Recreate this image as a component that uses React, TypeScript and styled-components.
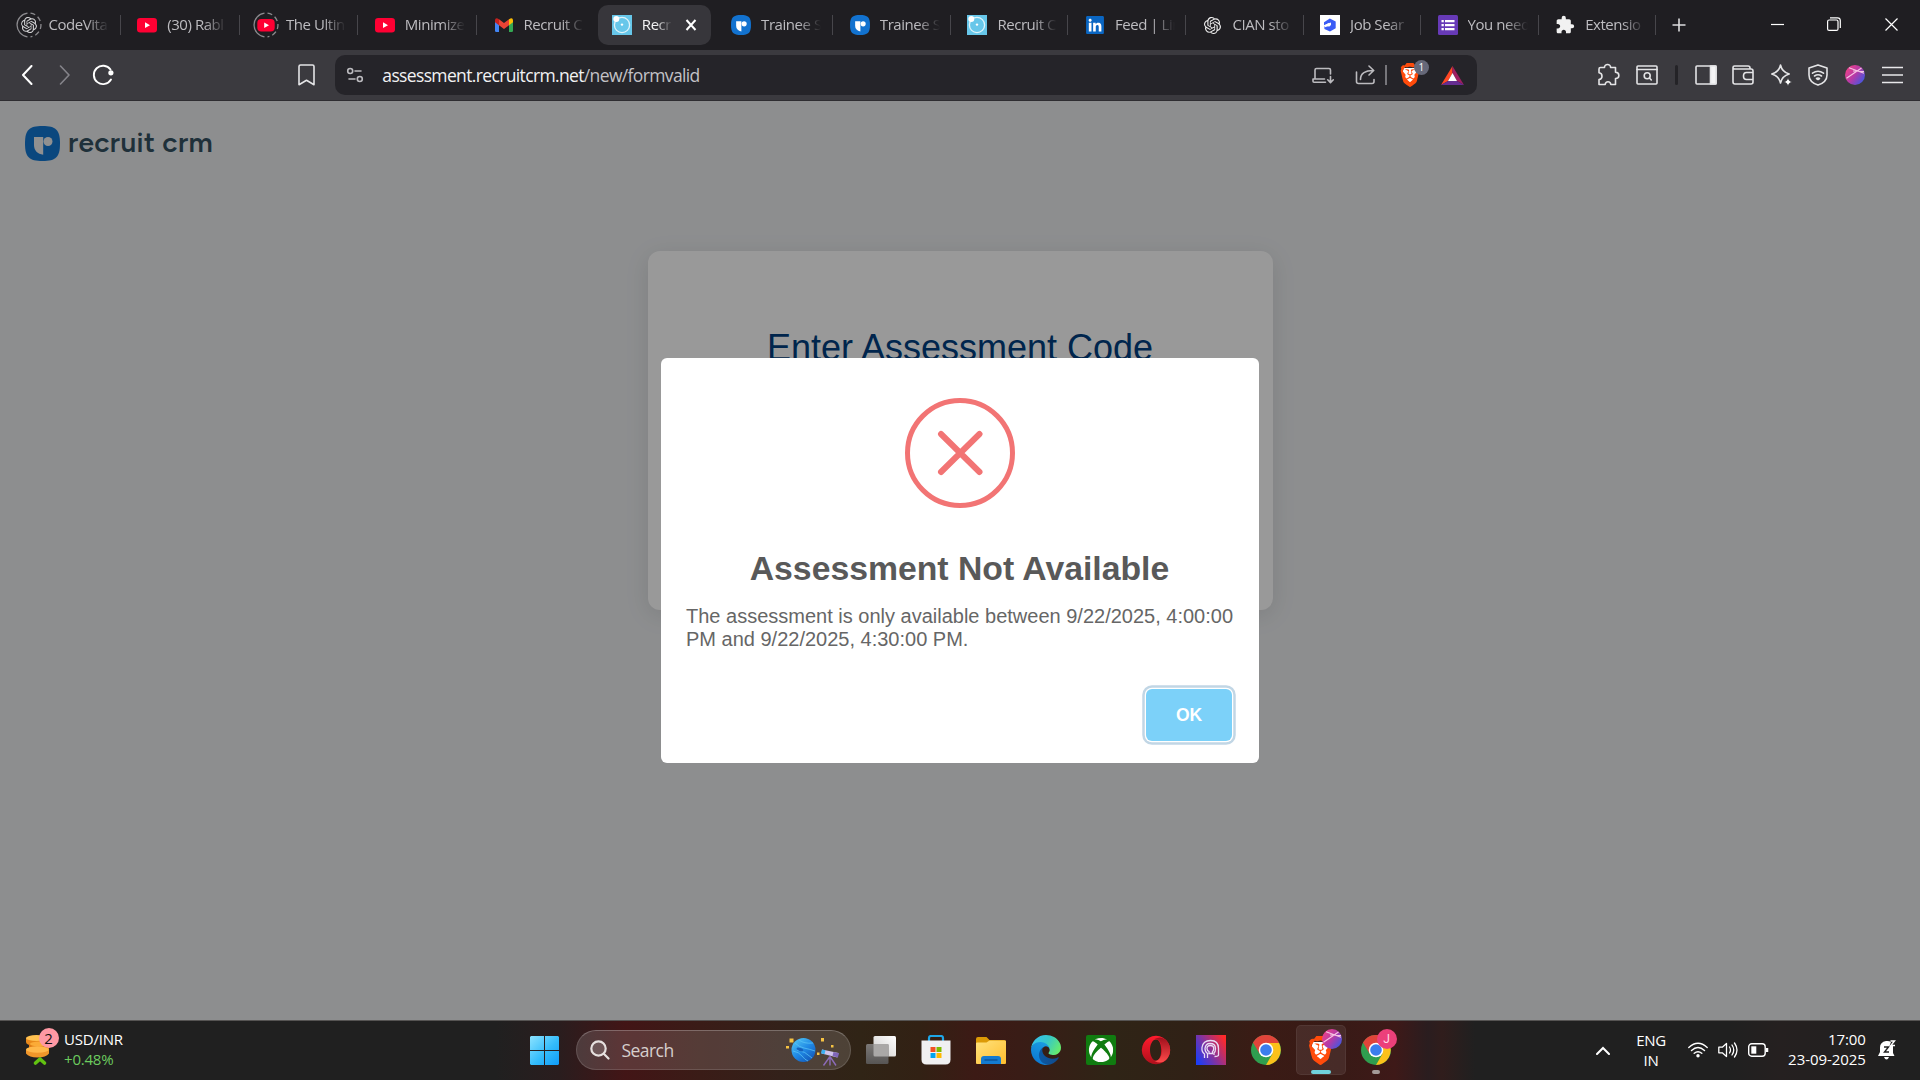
import React from "react";
import styled, { createGlobalStyle, css } from "styled-components";
import { SiBrave, SiOpenai } from "react-icons/si";
import { FaXbox, FaLinkedin } from "react-icons/fa";
import { MdExtension } from "react-icons/md";

const uiFont = `"Segoe UI", "Open Sans", "Noto Sans", sans-serif`;
const pageFont = `Arial, "Liberation Sans", sans-serif`;

const GlobalStyle = createGlobalStyle`
  * { box-sizing: border-box; }
  body { margin: 0; background: #202020; overflow: hidden; }
  svg { display: block; flex: none; }
`;

const Screen = styled.div`
  display: flex;
  flex-direction: column;
  width: 1920px;
  height: 1080px;
  overflow: hidden;
  font-family: ${uiFont};
`;

/* ---------- tab strip ---------- */
const TabStrip = styled.header`
  display: flex;
  align-items: center;
  height: 50px;
  padding-left: 2px;
  background: #1f1e22;
  flex: none;
`;

const TabItem = styled.div<{ $active?: boolean; $width: number; $divider?: boolean }>`
  display: flex;
  align-items: center;
  width: ${(p) => p.$width}px;
  height: 40px;
  padding-left: 16.5px;
  flex: none;
  ${(p) =>
    p.$divider &&
    css`
      background: linear-gradient(#47464b, #47464b) right center / 1px 20px no-repeat;
    `}
  ${(p) =>
    p.$active &&
    css`
      width: ${p.$width - 5.5}px;
      margin: 0 3.5px 0 2px;
      padding-left: 14px;
      border-radius: 10px;
      background: #37363b;
    `}
`;

const Favicon = styled.span`
  display: flex;
  align-items: center;
  justify-content: center;
  width: 20px;
  height: 20px;
  margin-right: 10px;
  flex: none;
  color: #e9e9ea;
  svg { overflow: visible; }
`;

const TabTitle = styled.span<{ $active?: boolean }>`
  width: ${(p) => (p.$active ? 30 : 60)}px;
  padding-bottom: 2px;
  white-space: nowrap;
  font-size: 15px;
  line-height: 20px;
  letter-spacing: -0.45px;
  color: ${(p) => (p.$active ? "#f4f4f5" : "#bdbcc0")};
  mask-image: linear-gradient(90deg, #000 ${(p) => (p.$active ? 45 : 62)}%, transparent 100%);
`;

const TabClose = styled.span`
  margin-left: 7px;
`;

const NewTab = styled.span`
  display: flex;
  justify-content: center;
  width: 46px;
`;

const WindowControls = styled.div`
  display: flex;
  margin-left: auto;
  padding-bottom: 2px;
`;

const WindowControl = styled.span`
  display: flex;
  align-items: center;
  justify-content: center;
  width: 57px;
  height: 40px;
`;

/* ---------- toolbar ---------- */
const Toolbar = styled.nav`
  display: flex;
  align-items: center;
  height: 51px;
  background: #3b3a3f;
  border-bottom: 1px solid #2e2d31;
  color: #e4e4e6;
  flex: none;
`;

const NavButtons = styled.div`
  display: flex;
  width: 288px;
  padding-left: 8px;
`;

const Slot = styled.span<{ $w?: number }>`
  display: flex;
  align-items: center;
  justify-content: center;
  width: ${(p) => p.$w ?? 37.3}px;
  height: 40px;
  flex: none;
`;

const AddressBar = styled.div`
  display: flex;
  align-items: center;
  width: 1142px;
  height: 40px;
  margin-left: 10px;
  padding: 0 5.5px 0 11px;
  border-radius: 10px;
  background: #252429;
  color: #bcbbbf;
`;

const Url = styled.span`
  flex: 1;
  padding-left: 18px;
  padding-bottom: 1px;
  font-size: 17.5px;
  line-height: 24px;
  letter-spacing: -0.64px;
  white-space: nowrap;
  color: #c3c2c6;
  b { font-weight: 400; color: #f2f2f3; }
`;

const ThinRule = styled.span`
  width: 1.5px;
  height: 20px;
  background: #77767b;
`;

const ShieldWrap = styled.span`
  position: relative;
  display: flex;
  justify-content: center;
  width: 47px;
`;

const Count = styled.span`
  position: absolute;
  left: 27px;
  top: -3px;
  width: 15px;
  height: 15px;
  border-radius: 50%;
  background: #666879;
  color: #fff;
  font-size: 10px;
  line-height: 15px;
  text-align: center;
`;

const Tools = styled.div`
  display: flex;
  align-items: center;
  margin-left: auto;
  padding-right: 8.7px;
`;

const DarkRule = styled.span`
  width: 3px;
  height: 20px;
  border-radius: 2px;
  background: #242327;
`;

/* ---------- page ---------- */
const Page = styled.main`
  position: relative;
  height: 919px;
  flex: none;
  background: #ebedef;
  font-family: ${pageFont};
`;

const Brand = styled.div`
  display: flex;
  align-items: center;
  height: 85px;
  padding-left: 25px;
  gap: 8px;
`;

const BrandName = styled.span`
  padding-bottom: 4px;
  font-family: Figtree, Inter, sans-serif;
  font-size: 28px;
  font-weight: 600;
  line-height: 34px;
  letter-spacing: 0.35px;
  color: #345061;
`;

const CodeCard = styled.section`
  width: 625px;
  height: 359px;
  margin: 65px auto 0;
  padding-top: 74px;
  border-radius: 12px;
  background: #fff;
  box-shadow: 0 5px 25px rgba(0, 0, 0, 0.1);
  text-align: center;
`;

const CardTitle = styled.h1`
  margin: 0;
  font-size: 36px;
  font-weight: 400;
  line-height: 46px;
  color: #003f80;
`;

const Overlay = styled.div`
  position: absolute;
  inset: 0;
  display: flex;
  justify-content: center;
  align-items: flex-start;
  padding-top: 257px;
  background: rgba(0, 0, 0, 0.4);
`;

const Dialog = styled.div`
  display: flex;
  flex-direction: column;
  width: 598px;
  height: 405px;
  border-radius: 6px;
  background: #fff;
`;

const ErrorMark = styled.div`
  display: flex;
  align-items: center;
  justify-content: center;
  width: 110px;
  height: 110px;
  margin: 40px auto 0;
  padding-bottom: 1px;
  border: 5px solid #f27474;
  border-radius: 50%;
`;

const DialogTitle = styled.h2`
  margin: 41px 1px 0 0;
  font-size: 33.75px;
  font-weight: 700;
  line-height: 38px;
  text-align: center;
  color: #595959;
`;

const DialogText = styled.p`
  margin: 18px 0 0;
  padding: 0 20px 0 25px;
  font-size: 20px;
  line-height: 23px;
  color: #666;
`;

const DialogFooter = styled.div`
  display: flex;
  justify-content: flex-end;
  margin-top: auto;
  padding: 0 27px 22px 0;
`;

const OkButton = styled.button`
  width: 86px;
  height: 52px;
  border: 0;
  border-radius: 6px;
  background: #7cd1f9;
  box-shadow: 0 0 0 1.25px #fff, 0 0 0 3.75px rgba(43, 114, 165, 0.29);
  color: #fff;
  font: 700 17.5px/20px ${pageFont};
`;

/* ---------- taskbar ---------- */
const Taskbar = styled.footer`
  display: flex;
  align-items: center;
  height: 60px;
  padding-bottom: 1px;
  border-top: 1px solid #565453;
  color: #fff;
  background: linear-gradient(
    90deg,
    #202020 0,
    #202020 495px,
    #2a1d1e 560px,
    #421516 625px,
    #3a1c17 700px,
    #33211a 780px,
    #302416 860px,
    #322114 920px,
    #3c1a15 975px,
    #391c16 1020px,
    #2f2416 1110px,
    #302116 1190px,
    #3a1b15 1260px,
    #381a16 1340px,
    #3e1918 1395px,
    #2a1d1f 1428px,
    #301d1c 1442px,
    #202020 1475px,
    #202020 1730px,
    #252020 1780px,
    #202020 1900px
  );
`;

const Widget = styled.div`
  display: flex;
  align-items: center;
  width: 519.5px;
  padding-left: 24px;
  gap: 10px;
`;

const CoinArt = styled.div`
  position: relative;
  width: 30px;
  height: 40px;
`;

const RoundBadge = styled.span<{ $bg: string; $fg: string; $x: number; $y: number; $size?: number }>`
  position: absolute;
  left: ${(p) => p.$x}px;
  top: ${(p) => p.$y}px;
  width: 20px;
  height: 20px;
  border-radius: 50%;
  background: ${(p) => p.$bg};
  color: ${(p) => p.$fg};
  font-family: ${(p) => (p.$size ? "Roboto, sans-serif" : "inherit")};
  font-size: ${(p) => p.$size ?? 15}px;
  line-height: 20px;
  text-align: center;
`;

const Stack = styled.div<{ $align?: string; $ls?: number; $lift?: number }>`
  display: flex;
  flex-direction: column;
  padding-bottom: ${(p) => p.$lift ?? 3}px;
  text-align: ${(p) => p.$align ?? "left"};
  font-size: 15px;
  line-height: 20px;
  letter-spacing: ${(p) => p.$ls ?? -0.3}px;
  white-space: nowrap;
`;

const Gain = styled.span`
  color: #6ccb5f;
`;

const TaskButton = styled.span<{ $active?: boolean }>`
  position: relative;
  display: flex;
  align-items: center;
  justify-content: center;
  width: 50px;
  height: 50px;
  margin-right: 5px;
  flex: none;
  border-radius: 5px;
  ${(p) =>
    p.$active &&
    css`
      background: rgba(255, 255, 255, 0.08);
      box-shadow: inset 0 0 0 1px rgba(255, 255, 255, 0.06);
    `}
`;

const RunMark = styled.i<{ $w: number; $color: string }>`
  position: absolute;
  left: ${(p) => (50 - p.$w) / 2}px;
  bottom: 1px;
  width: ${(p) => p.$w}px;
  height: 4px;
  border-radius: 2px;
  background: ${(p) => p.$color};
`;

const SearchBox = styled.div`
  display: flex;
  align-items: center;
  width: 275px;
  height: 40px;
  margin: 0 5px 0 1px;
  padding: 0 9px 0 13px;
  border: 1px solid rgba(255, 255, 255, 0.13);
  border-top-color: rgba(255, 255, 255, 0.24);
  border-radius: 20px;
  background: rgba(255, 255, 255, 0.14);
  flex: none;
`;

const SearchLabel = styled.span`
  flex: 1;
  padding: 0 0 1px 12px;
  font-size: 17.5px;
  line-height: 24px;
  letter-spacing: -0.55px;
  color: #d6cfcd;
`;

const Tray = styled.div`
  display: flex;
  align-items: center;
  margin-left: auto;
  padding-right: 23px;
`;

const TraySlot = styled.span<{ $w: number }>`
  display: flex;
  justify-content: center;
  width: ${(p) => p.$w}px;
`;

const line = {
  fill: "none",
  stroke: "currentColor",
  strokeWidth: 1.6,
  strokeLinecap: "round" as const,
  strokeLinejoin: "round" as const,
};

/* ---------- favicons ---------- */
const YouTubeIcon = ({ w = 20 }: { w?: number }) => (
  <svg width={w} height={w * 0.72} viewBox="0 0 20 14.4">
    <rect width="20" height="14.4" rx="3.2" fill="#ff0033" />
    <path d="M8 4.3l5 2.9-5 2.9z" fill="#fff" />
  </svg>
);

const LoadingRing = ({ children }: { children: React.ReactNode }) => (
  <svg width="26" height="26" viewBox="0 0 26 26">
    <path d="M11.500 1.100A12 12 0 0 0 11.500 24.900" fill="none" stroke="#8b8a8e" strokeWidth="1.3" />
    <path
      d="M14.500 1.100A12 12 0 0 1 14.500 24.900"
      fill="none"
      stroke="#8b8a8e"
      strokeWidth="1.3"
      strokeDasharray="5 3.1"
    />
    {children}
  </svg>
);

const GmailIcon = () => (
  <svg width="18" height="14" viewBox="0 0 18 14">
    <path d="M0 2.500V12.700Q0 14 1.300 14H4V5z" fill="#4285f4" />
    <path d="M18 2.500V12.700Q18 14 16.700 14H14V5z" fill="#34a853" />
    <path d="M14 1.200L16 .2Q18 0 18 2.300V4.200L14 7.200z" fill="#fbbc04" />
    <path d="M4 1.200L2 .2Q0 0 0 2.300V4.200L4 7.200z" fill="#c5221f" />
    <path d="M4 1.200L9 5l5-3.800v6L9 10.900 4 7.200z" fill="#ea4335" />
  </svg>
);

const OrbitIcon = () => (
  <svg width="20" height="20" viewBox="0 0 20 20">
    <rect width="20" height="20" fill="#67c7ea" />
    <circle cx="10" cy="10" r="7.600" fill="none" stroke="#dff4fb" strokeWidth="1.300" />
    <circle cx="4.300" cy="3.900" r="3" fill="#fff" />
    <circle cx="10" cy="9.600" r="1.200" fill="#fff" />
  </svg>
);

const RecruitIcon = ({ size = 20, bg = "#1272cf", fg = "#fff" }: { size?: number; bg?: string; fg?: string }) => (
  <svg width={size} height={size} viewBox="0 0 35 35">
    <path d="M17.500 0C31 0 35 4 35 17.500S31 35 17.500 35 0 31 0 17.500 4 0 17.500 0z" fill={bg} />
    <path d="M9 11h9.200v17.700C12.500 28 9 24.500 9 19z" fill={fg} />
    <circle cx="23" cy="15.500" r="4.500" fill={fg} />
  </svg>
);

const CubeIcon = () => (
  <svg width="20" height="20" viewBox="0 0 20 20">
    <rect width="20" height="20" fill="#fff" />
    <path d="M4 7.300L9.800 3.600l5.900 3v6.600L10 16.600l-5.600-2.700v-2.700l5 .3L11 10V7.500L8 8.600 4 10.300z" fill="#3a5cf5" />
    <path d="M4.200 10.600l5-2.800v2.400l-4 2z" fill="#fff" />
  </svg>
);

const FormIcon = () => (
  <svg width="20" height="20" viewBox="0 0 20 20">
    <rect width="20" height="20" rx="1.500" fill="#673ab7" />
    <path d="M3.500 5h2.300v2.200H3.500zM7 5h9.500v2.200H7zM3.500 9h2.300v2.200H3.500zM7 9h9.500v2.200H7zM3.500 13h2.300v2.200H3.500zM7 13h9.500v2.200H7z" fill="#fff" />
  </svg>
);

const LinkedInIcon = () => (
  <svg width="18" height="18" viewBox="0 0 18 18">
    <rect x="2" y="2" width="14" height="14" fill="#fff" />
    <FaLinkedin x={-1.200} y={-1.200} size={20.400} color="#0a66c2" />
  </svg>
);

type Tab = { title: string; icon: React.ReactNode; active?: boolean; noDivider?: boolean };

const tabs: Tab[] = [
  { title: "CodeVita", icon: <LoadingRing><SiOpenai x={5} y={5} size={16} color="#d4d4d6" /></LoadingRing> },
  { title: "(30) Rabl", icon: <YouTubeIcon /> },
  {
    title: "The Ultin",
    icon: (
      <LoadingRing>
        <rect x="4.300" y="7" width="17.400" height="12.500" rx="4" fill="#ff0033" />
        <path d="M11.200 10.500l4.800 2.700-4.800 2.700z" fill="#fff" />
      </LoadingRing>
    ),
  },
  { title: "Minimize", icon: <YouTubeIcon /> },
  { title: "Recruit C", icon: <GmailIcon />, noDivider: true },
  { title: "Recr", icon: <OrbitIcon />, active: true },
  { title: "Trainee S", icon: <RecruitIcon /> },
  { title: "Trainee S", icon: <RecruitIcon /> },
  { title: "Recruit C", icon: <OrbitIcon /> },
  { title: "Feed | Lin", icon: <LinkedInIcon /> },
  { title: "CIAN sto", icon: <SiOpenai size={17} color="#f0f0f0" /> },
  { title: "Job Sear", icon: <CubeIcon /> },
  { title: "You need", icon: <FormIcon /> },
  { title: "Extensio", icon: <MdExtension size={20} color="#f1f1f1" /> },
];

const BraveIcon = ({ w, h }: { w: number; h: number }) => (
  <svg width={w} height={h} viewBox="0 0 24 24" preserveAspectRatio="none">
    <path d="M5 5h14l1 5-2 7-6 4-6-4-2-7z" fill="#fff" />
    <SiBrave x={0} y={0} size={24} color="#ff4b0b" />
  </svg>
);

const ProfileOrb = ({ size = 20 }: { size?: number }) => (
  <svg width={size} height={size} viewBox="0 0 20 20">
    <defs>
      <linearGradient id="orb" x1=".1" y1=".2" x2=".9" y2=".8">
        <stop offset="0" stopColor="#e8418c" />
        <stop offset=".5" stopColor="#b53aa8" />
        <stop offset="1" stopColor="#4a55dd" />
      </linearGradient>
    </defs>
    <circle cx="10" cy="10" r="10" fill="url(#orb)" />
    <path d="M1.500 13.200L16.500 3M4 2.800l15 5.500M8 6l11 .5" stroke="#f6c3e4" strokeWidth="1.100" fill="none" />
  </svg>
);

const ChromeIcon = () => (
  <svg width="30" height="30" viewBox="0 0 30 30">
    <circle cx="15" cy="15" r="15" fill="#2f9e4f" />
    <path d="M15 15L2 7.500A15 15 0 0 1 28 7.500z" fill="#e0443a" />
    <path d="M2 7.500L8.600 18.800 15 8z" fill="#e0443a" />
    <path d="M15 8h13a15 15 0 0 1-13 22l6.500-11.300z" fill="#fcc11a" />
    <circle cx="15" cy="15" r="7.300" fill="#fff" />
    <circle cx="15" cy="15" r="5.800" fill="#3b7ded" />
  </svg>
);

const EdgeIcon = () => (
  <svg width="30" height="30" viewBox="0 0 256 256">
    <defs>
      <linearGradient id="edgeA" x1="0" x2="1"><stop stopColor="#0c59a4" /><stop offset="1" stopColor="#114a8b" /></linearGradient>
      <linearGradient id="edgeB" x1=".6" y1="0" x2=".2" y2="1"><stop stopColor="#1b9de2" /><stop offset="1" stopColor="#0a74d0" /></linearGradient>
      <linearGradient id="edgeC" x1="0" y1=".2" x2="1" y2=".6"><stop stopColor="#35c1f1" /><stop offset=".5" stopColor="#36c7c9" /><stop offset="1" stopColor="#66eb6e" /></linearGradient>
    </defs>
    <g transform="translate(-4.630 -4.920)">
      <path fill="url(#edgeA)" d="M235.680 195.460a93.730 93.730 0 0 1-10.540 4.710 101.870 101.870 0 0 1-35.900 6.460c-47.320 0-88.540-32.550-88.540-74.320A31.480 31.480 0 0 1 117.130 105c-42.800 1.800-53.800 46.400-53.800 72.530 0 73.880 68.090 81.370 82.760 81.370 7.910 0 19.840-2.300 27-4.560l1.310-.44A128.340 128.340 0 0 0 241 201.200a4 4 0 0 0-5.320-5.740z" />
      <path fill="url(#edgeB)" d="M110.340 246.340A79.200 79.200 0 0 1 87.600 225 80.720 80.720 0 0 1 117.130 105c3.120-1.470 8.450-4.130 15.540-4a32.350 32.350 0 0 1 25.690 13 31.880 31.880 0 0 1 6.360 18.660c0-.21 24.460-79.600-80-79.600-43.900 0-80 41.660-80 78.210a130.150 130.150 0 0 0 12.110 56 128 128 0 0 0 156.380 67.110 75.550 75.550 0 0 1-62.780-8z" />
      <path fill="url(#edgeC)" d="M156.940 153.780c-.81 1.050-3.300 2.500-3.300 5.660 0 2.610 1.700 5.120 4.720 7.230 14.380 10 41.490 8.680 41.560 8.680A59.560 59.560 0 0 0 230.190 167a61.380 61.380 0 0 0 30.430-52.880c.26-22.410-8-37.310-11.340-43.910C228.090 28.760 182.350 4.920 132.610 4.920a128 128 0 0 0-128 126.200c.48-36.540 36.800-66.050 80-66.050 3.500 0 23.460.34 42 10.070 16.340 8.580 24.900 18.940 30.850 29.210 6.180 10.670 7.280 24.150 7.280 29.520S162 147.200 156.940 153.780z" />
    </g>
  </svg>
);

const PuzzleOutline = () => (
  <svg width="24" height="24" viewBox="0 0 24 24" {...line}>
    <path d="M3.500 4.500H7.500C7.300 .5 13.800 .5 13.600 4.500H18.500V9.300C23 9.500 23 15.500 18.500 15.500V21.500H13.800C13.500 17.800 8.500 17.800 8.200 21.500H2V16.500C6 15.800 6 10.500 2 9.800V6Q2 4.500 3.500 4.500Z" />
  </svg>
);

const WindowsLogo = () => (
  <svg width="29" height="29" viewBox="0 0 29 29">
    <defs>
      <linearGradient id="win" x1="0" y1="0" x2="1" y2="1"><stop stopColor="#8ce3ff" /><stop offset=".55" stopColor="#34bcfb" /><stop offset="1" stopColor="#0f9bf8" /></linearGradient>
    </defs>
    <path d="M1 0H14v14H0V1zM15 0H28l1 1v13H15zM0 15h14v14H1l-1-1zM15 15h14v13l-1 1H15z" fill="url(#win)" />
  </svg>
);

const SearchArt = () => (
  <svg width="56" height="32" viewBox="0 0 56 32">
    <defs>
      <linearGradient id="planet" x1=".1" y1="0" x2=".9" y2="1"><stop stopColor="#52c8f5" /><stop offset=".5" stopColor="#2089e5" /><stop offset="1" stopColor="#1050b2" /></linearGradient>
    </defs>
    <circle cx="18.500" cy="16" r="12" fill="url(#planet)" />
    <path d="M10 9q4 4 9 5t11 3M8 17q6 1 9 5t6 5M12 16q8 1 15 8M14 6q5 4 14 3" stroke="#5bc4f5" strokeWidth="1" fill="none" opacity=".75" />
    <ellipse cx="15" cy="15.500" rx="3.500" ry="1.500" fill="#1561bd" transform="rotate(20 15 15.500)" />
    <path d="M4.500 4.500h4v4h-4zM1 12h3v2.500H1zM36 4h3v3.500h-3zM46 11h2.500v2.500H46zM32 18.500h2.500V21H32z" fill="#f6c343" />
    <path d="M37 15.500l16.500 3.500-1.200 4.500L36.500 19.500z" fill="#cfc2ea" />
    <path d="M37 15.500l3.500.8-1 4-3.500-1z" fill="#3ab0f2" />
    <path d="M48.500 18l5.500 1.200-1.200 4.300-5.300-1.500z" fill="#8066b8" />
    <path d="M45 22.500l-6.500 9M45 22.500v9M45 22.500l6 9" stroke="#8c6bb8" strokeWidth="1.400" />
  </svg>
);

export default function App() {
  return (
    <Screen>
      <GlobalStyle />
      <TabStrip>
        {tabs.map((t, i) => (
          <TabItem key={i} $active={t.active} $width={i < 7 ? 118.780 : 117.550} $divider={!t.active && !t.noDivider}>
            <Favicon>{t.icon}</Favicon>
            <TabTitle $active={t.active}>{t.title}</TabTitle>
            {t.active && (
              <TabClose>
                <svg width="24" height="12" viewBox="0 0 24 12">
                  <path d="M7.500 1l9 10M16.500 1L7.500 11" stroke="#fff" strokeWidth="2" />
                </svg>
              </TabClose>
            )}
          </TabItem>
        ))}
        <NewTab>
          <svg width="14" height="14" viewBox="0 0 14 14"><path d="M7 .5v13M.5 7h13" stroke="#dcdcde" strokeWidth="1.600" /></svg>
        </NewTab>
        <WindowControls>
          <WindowControl><svg width="13" height="13" viewBox="0 0 13 13"><path d="M0 6.500h13" stroke="#fff" strokeWidth="1.200" /></svg></WindowControl>
          <WindowControl>
            <svg width="16" height="14" viewBox="0 0 16 14" fill="none" stroke="#fff" strokeWidth="1.200">
              <rect x=".6" y="3" width="10.400" height="10.400" rx="1.500" />
              <path d="M3 .8h7.500q2.800 0 2.800 2.800V11" />
            </svg>
          </WindowControl>
          <WindowControl><svg width="13" height="13" viewBox="0 0 13 13"><path d="M.5.5l12 12M12.500.5l-12 12" stroke="#fff" strokeWidth="1.200" /></svg></WindowControl>
        </WindowControls>
      </TabStrip>

      <Toolbar>
        <NavButtons>
          <Slot $w={38}><svg width="12" height="20" viewBox="0 0 12 20" {...line} strokeWidth={2} stroke="#fff"><path d="M10.500 1L2 10l8.500 9" /></svg></Slot>
          <Slot $w={38}><svg width="12" height="20" viewBox="0 0 12 20" {...line} stroke="#85848a"><path d="M1.500 1l8.500 9-8.500 9" /></svg></Slot>
          <Slot $w={37}>
            <svg width="22" height="22" viewBox="0 0 22 22" {...line} strokeWidth={1.900} stroke="#fff">
              <path d="M18.500 5.500A9.200 9.200 0 1 0 19 15.500" />
              <circle cx="18.900" cy="8.800" r="2.600" fill="#fff" stroke="none" />
            </svg>
          </Slot>
        </NavButtons>
        <Slot><svg width="17" height="22" viewBox="0 0 17 22" {...line}><path d="M1 2.500Q1 1 2.500 1h12Q16 1 16 2.500v18.200l-7.500-4.400L1 20.700z" /></svg></Slot>
        <AddressBar>
          <svg width="18" height="16" viewBox="0 0 18 16" {...line}>
            <circle cx="4.200" cy="4" r="2.500" /><path d="M9 4h6M3 12h6" /><circle cx="13.800" cy="12" r="2.500" />
          </svg>
          <Url><b>assessment.recruitcrm.net</b>/new/formvalid</Url>
          <Slot $w={43}>
            <svg width="22" height="17" viewBox="0 0 22 17" {...line}>
              <path d="M18.500 7V3Q18.500 1.500 17 1.500H4.500Q3 1.500 3 3v9M13.500 15.200H2q-1 0-1-1V12h11.500M18.500 9.500v5.700M15.700 12.800l2.800 2.800 2.800-2.800" />
            </svg>
          </Slot>
          <Slot $w={40.500}>
            <svg width="21" height="20" viewBox="0 0 21 20" {...line}>
              <path d="M1.500 7v9.500Q1.500 18.500 3.500 18.500h13.500Q19 18.500 19 16.500v-2M5.500 14.500Q5.500 5.500 18.500 5.500M14 1l4.700 4.500L14 10" />
            </svg>
          </Slot>
          <ThinRule />
          <ShieldWrap><BraveIcon w={22} h={24} /><Count>1</Count></ShieldWrap>
          <Slot $w={38}>
            <svg width="23" height="19" viewBox="0 0 23 19">
              <path d="M11.500 0L0 19l7-4 4.500-8z" fill="#ff4724" />
              <path d="M11.500 0L23 19l-7-4-4.500-8z" fill="#9e1f63" />
              <path d="M0 19h23l-7-4H7z" fill="#662d91" />
              <path d="M11.500 7L7 15h9z" fill="#fff" />
            </svg>
          </Slot>
        </AddressBar>
        <Tools>
          <Slot><PuzzleOutline /></Slot>
          <Slot>
            <svg width="22" height="20" viewBox="0 0 22 20" {...line}>
              <rect x="1" y="1" width="20" height="18" rx="1" /><path d="M1 4.500h20" /><circle cx="11.200" cy="10.800" r="3" /><path d="M13.500 13l1.800 2" />
            </svg>
          </Slot>
          <Slot $w={22.300}><DarkRule /></Slot>
          <Slot>
            <svg width="22" height="20" viewBox="0 0 22 20" {...line}><rect x="1" y="1" width="20" height="18" rx="1" /><path d="M15.500 1H21v18h-5.500z" fill="#f4f4f5" /></svg>
          </Slot>
          <Slot>
            <svg width="22" height="20" viewBox="0 0 22 20" {...line}>
              <path d="M18 3.800V3Q18 1 16 1H2.500Q1 1 1 2.500V17q0 2 2 2h16q2 0 2-2V6q0-2-2-2H2.500Q1 4 1 2.500M21 7.500h-6.500q-3 0-3 3.500t3 3.500H21z" />
            </svg>
          </Slot>
          <Slot>
            <svg width="22" height="22" viewBox="0 0 22 22" {...line}>
              <path d="M10.500 1q1.500 7 8.700 9-7.200 2-8.700 9-1.500-7-8.700-9 7.200-2 8.700-9z" />
              <path d="M18 14q.7 3.300 4 4-3.300.7-4 4-.7-3.300-4-4 3.300-.7 4-4z" fill="#fff" stroke="#3b3a3f" strokeWidth=".5" />
            </svg>
          </Slot>
          <Slot>
            <svg width="20" height="22" viewBox="0 0 20 22" {...line}>
              <path d="M10 .9l9 3v7q0 7-9 10.200Q1 17.900 1 10.900v-7z" />
              <path d="M4.500 9.200q5.500-4 11 0M6.500 12q3.500-2.500 7 0" /><path d="M8.500 14.500q1.500-1 3 0l-1.500 1z" fill="#fff" />
            </svg>
          </Slot>
          <Slot><ProfileOrb /></Slot>
          <Slot><svg width="21" height="18" viewBox="0 0 21 18"><path d="M0 1.500h21M0 9h21M0 16.500h21" stroke="#e8e8ea" strokeWidth="1.600" /></svg></Slot>
        </Tools>
      </Toolbar>

      <Page>
        <Brand>
          <RecruitIcon size={35} bg="#1277d3" fg="#f0f0f0" />
          <BrandName>recruit crm</BrandName>
        </Brand>
        <CodeCard><CardTitle>Enter Assessment Code</CardTitle></CodeCard>
        <Overlay>
          <Dialog>
            <ErrorMark>
              <svg width="46" height="46" viewBox="0 0 46 46"><path d="M4 4l38.500 38M42.500 4L4 42" stroke="#f27474" strokeWidth="6" strokeLinecap="round" /></svg>
            </ErrorMark>
            <DialogTitle>Assessment Not Available</DialogTitle>
            <DialogText>The assessment is only available between 9/22/2025, 4:00:00 PM and 9/22/2025, 4:30:00 PM.</DialogText>
            <DialogFooter><OkButton>OK</OkButton></DialogFooter>
          </Dialog>
        </Overlay>
      </Page>

      <Taskbar>
        <Widget>
          <CoinArt>
            <svg width="30" height="40" viewBox="0 0 30 40">
              <path d="M2 8v4q0 3 8 4l13-2V8z" fill="#e8891b" /><ellipse cx="12.500" cy="8" rx="10.500" ry="3" fill="#ffc150" />
              <path d="M5 14v4q2 3 12 3l8-2v-5z" fill="#e07c14" /><ellipse cx="15.500" cy="14" rx="9.500" ry="2.500" fill="#fbab37" />
              <path d="M2 19.500v4q3 4 11.500 4T25 23.500v-4z" fill="#f0962a" /><ellipse cx="13.500" cy="19.500" rx="11.500" ry="3.300" fill="#ffb84a" />
              <path d="M11.500 33l4.500-4 4.500 4" fill="none" stroke="#62c211" strokeWidth="3.600" strokeLinecap="round" strokeLinejoin="round" />
            </svg>
            <RoundBadge $bg="#ff99a4" $fg="#111" $x={14.500} $y={-2.500}>2</RoundBadge>
          </CoinArt>
          <Stack $ls={-0.200}><span>USD/INR</span><Gain>+0.48%</Gain></Stack>
        </Widget>
        <TaskButton><WindowsLogo /></TaskButton>
        <SearchBox>
          <svg width="20" height="20" viewBox="0 0 20 20" fill="none" stroke="#e6e0de" strokeWidth="2.200" strokeLinecap="round"><circle cx="8.500" cy="8.500" r="7.200" fill="rgba(255,255,255,.15)" /><path d="M13.800 13.800l4.700 4.700" /></svg>
          <SearchLabel>Search</SearchLabel>
          <SearchArt />
        </SearchBox>
        <TaskButton>
          <svg width="30" height="28" viewBox="0 0 30 28">
            <defs>
              <linearGradient id="tvA" x2="0" y2="1"><stop stopColor="#7b7876" /><stop offset="1" stopColor="#575554" /></linearGradient>
              <linearGradient id="tvB" x1="1" y1="0" x2="0" y2="1"><stop stopColor="#fff" /><stop offset="1" stopColor="#cfcdcc" /></linearGradient>
            </defs>
            <rect x="7.500" width="22.500" height="20.500" rx="1.500" fill="url(#tvB)" />
            <rect y="8" width="22.500" height="20" rx="1.500" fill="url(#tvA)" />
            <path d="M7.500 8h15v12.500H9q-1.500 0-1.500-1.500z" fill="#aaa8a7" />
          </svg>
        </TaskButton>
        <TaskButton>
          <svg width="30" height="30" viewBox="0 0 30 30">
            <path d="M8 7V3q0-2 2-2h10q2 0 2 2v4" fill="none" stroke="#1ea7e8" strokeWidth="2.200" />
            <path d="M.5 5.500h29v19q0 5-5 5h-19q-5 0-5-5z" fill="#f0f0f1" />
            <path d="M9.500 12h5v5h-5z" fill="#f25022" /><path d="M15.500 12h5v5h-5z" fill="#7fba00" />
            <path d="M9.500 18h5v5h-5z" fill="#00a4ef" /><path d="M15.500 18h5v5h-5z" fill="#ffb900" />
          </svg>
        </TaskButton>
        <TaskButton>
          <svg width="30" height="27" viewBox="0 0 30 27">
            <defs><linearGradient id="fold" x1="0" y1="0" x2="1" y2="1"><stop stopColor="#ffe27d" /><stop offset="1" stopColor="#ffbe2e" /></linearGradient></defs>
            <path d="M0 2Q0 0 2 0h8.500l3 3H28q2 0 2 2v7H0z" fill="#dc9a06" />
            <path d="M0 6.500q0-1 1-1h9.500l3-2H29q1 0 1 1V26q0 1-1 1H1q-1 0-1-1z" fill="url(#fold)" />
            <path d="M5 27v-5q0-3 3-3h14q3 0 3 3v5z" fill="#147bd1" /><path d="M8.500 23h13" stroke="#0c4f91" strokeWidth="1.300" />
          </svg>
        </TaskButton>
        <TaskButton><EdgeIcon /></TaskButton>
        <TaskButton>
          <svg width="30" height="30" viewBox="0 0 30 30"><rect width="30" height="30" rx="2" fill="#107c10" /><FaXbox x={2.500} y={2.500} size={25} color="#fff" /></svg>
        </TaskButton>
        <TaskButton>
          <svg width="30" height="30" viewBox="0 0 30 30">
            <defs><linearGradient id="op" x2="0" y2="1"><stop stopColor="#ff1b2d" /><stop offset="1" stopColor="#b0101c" /></linearGradient><linearGradient id="op2" x2="0" y2="1"><stop stopColor="#a00f1c" /><stop offset="1" stopColor="#ff4b4b" /></linearGradient></defs>
            <path fillRule="evenodd" d="M15 .8a14.200 14.200 0 1 0 .01 0zM15 4.500c3.400 0 5.200 5 5.200 10.500S18.400 25.500 15 25.500 9 20.500 9 15 11.600 4.500 15 4.500z" fill="url(#op)" />
            <path d="M13.500 4Q20 .5 25 5a14.200 14.200 0 0 1 0 20q-5 4.500-11.500 1c4.500.5 7.500-5 7.500-11S18 3.500 13.500 4z" fill="url(#op2)" />
          </svg>
        </TaskButton>
        <TaskButton>
          <svg width="30" height="30" viewBox="0 0 30 30">
            <defs><linearGradient id="mind" x1="0" y1=".8" x2="1" y2=".2"><stop stopColor="#1d3df5" /><stop offset=".5" stopColor="#8d3296" /><stop offset="1" stopColor="#ff2a2a" /></linearGradient></defs>
            <rect width="30" height="30" fill="url(#mind)" />
            <path d="M8.500 23v-4Q5.500 17 6 12.500 7 5.500 14.500 5.500q8 0 8 8v6.500q0 1.500-4 1.500M11.500 23v-4.500q-2.500-1.500-2.500-5Q9.500 8.500 14 8.500q5.500 0 5.500 5 0 3.500-1.500 4.500v2M13 18.500h3.500v-2q1.200-1 1.200-3 0-3-3.400-3t-3.300 3q0 2 2 3z" fill="none" stroke="#e9ddf5" strokeWidth="1.300" />
          </svg>
        </TaskButton>
        <TaskButton><ChromeIcon /></TaskButton>
        <TaskButton $active>
          <BraveIcon w={27} h={29} />
          <RoundBadge $bg="transparent" $fg="#fff" $x={26} $y={4}><ProfileOrb /></RoundBadge>
          <RunMark $w={20} $color="#70d2dc" />
        </TaskButton>
        <TaskButton>
          <ChromeIcon />
          <RoundBadge $bg="#ec407a" $fg="#ffd9e5" $x={26} $y={4} $size={12}>J</RoundBadge>
          <RunMark $w={8} $color="#a39a98" />
        </TaskButton>
        <Tray>
          <TraySlot $w={40}><svg width="14" height="9" viewBox="0 0 14 9"><path d="M1 8l6-6 6 6" fill="none" stroke="#fff" strokeWidth="2" strokeLinecap="round" /></svg></TraySlot>
          <TraySlot $w={56}><Stack $align="center" $lift={1}><span>ENG</span><span>IN</span></Stack></TraySlot>
          <TraySlot $w={38}>
            <svg width="20" height="16" viewBox="0 0 20 16" {...line} strokeWidth={1.400}>
              <path d="M.8 5.500q9.200-8.500 18.400 0M3.500 8.500q6.500-6 13 0M6.200 11.300q3.800-3.300 7.600 0" /><circle cx="10" cy="13.700" r="1.700" fill="#fff" stroke="none" />
            </svg>
          </TraySlot>
          <TraySlot $w={22}>
            <svg width="20" height="16" viewBox="0 0 20 16" {...line} strokeWidth={1.300}>
              <path d="M.8 5.200h3.500L8.500 1.500v13l-4.200-3.700H.8zM11.500 5q2 3 0 6M14 3q3.500 5 0 10M16.500 1q5 7 0 14" />
            </svg>
          </TraySlot>
          <TraySlot $w={39}>
            <svg width="21" height="14" viewBox="0 0 21 14" fill="none" stroke="#fff" strokeWidth="1.400">
              <rect x=".7" y=".8" width="16.500" height="12.400" rx="3" /><path d="M3.300 3.300h5v7.400h-5z" fill="#fff" stroke="none" /><path d="M19 5v4" strokeWidth="2.500" />
            </svg>
          </TraySlot>
          <TraySlot $w={98}><Stack $align="right" $ls={-0.050}><span>17:00</span><span>23-09-2025</span></Stack></TraySlot>
          <TraySlot $w={21}>
            <svg width="18" height="20" viewBox="0 0 18 20">
              <path d="M8 1q3-.5 5 1l-1.500 4H15v7l1.500 3H0l2-4V7.500Q2 2 8 1zM6 17h5q-1 2.500-2.500 2.500T6 17z" fill="#fff" />
              <path d="M6 7h4.500L6.500 12H11" fill="none" stroke="#202020" strokeWidth="1.400" /><path d="M12.500 1h4L12.800 5.500H17" fill="none" stroke="#fff" strokeWidth="1.400" />
            </svg>
          </TraySlot>
        </Tray>
      </Taskbar>
    </Screen>
  );
}
